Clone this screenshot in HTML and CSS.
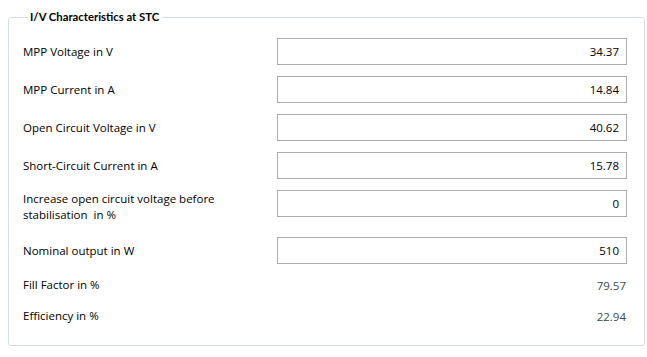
FILE: index.html
```html
<!DOCTYPE html>
<html lang="en">
<head>
    <meta charset="UTF-8">
    <title>I/V Characteristics at STC</title>
    <link rel="stylesheet" href="styles.css">
</head>
<body>

<fieldset class="group">
    <legend>I/V Characteristics at STC</legend>

    <div class="row">
        <label for="mppVoltage">MPP Voltage in V</label>
        <input type="text" id="mppVoltage" value="34.37">
    </div>
    <div class="row">
        <label for="mppCurrent">MPP Current in A</label>
        <input type="text" id="mppCurrent" value="14.84">
    </div>
    <div class="row">
        <label for="openVoltage">Open Circuit Voltage in V</label>
        <input type="text" id="openVoltage" value="40.62">
    </div>
    <div class="row">
        <label for="shortCurrent">Short-Circuit Current in A</label>
        <input type="text" id="shortCurrent" value="15.78">
    </div>
    <div class="row row-tall">
        <label for="stabilisation">Increase open circuit voltage before<br>stabilisation&nbsp; in %</label>
        <input type="text" id="stabilisation" value="0">
    </div>
    <div class="row">
        <label for="nominal">Nominal output in W</label>
        <input type="text" id="nominal" value="510">
    </div>
    <div class="row row-readonly">
        <span class="label">Fill Factor in %</span>
        <span class="value">79.57</span>
    </div>
    <div class="row row-readonly">
        <span class="label">Efficiency in %</span>
        <span class="value">22.94</span>
    </div>
</fieldset>

</body>
</html>
```

FILE: styles.css
```css
body {
    font-family: "Open Sans", "Noto Sans", sans-serif;
    font-size: 11.5px;
    color: #000;
    background-color: #fff;
    margin: 0;
    padding: 0;
}

.group {
    width: 637px;
    height: 337px;
    box-sizing: border-box;
    margin: 9px 0 0 8px;
    padding: 13px 17px 0 14px;
    border: 1px solid #d5dfe5;
    border-radius: 3px;
    display: flex;
    flex-direction: column;
    gap: 11px;
}

.group legend {
    font-family: Lato, "Open Sans", sans-serif;
    font-weight: bold;
    font-size: 11.3px;
    line-height: 16px;
    padding: 0 3px 0 2px;
    margin-left: 5px;
}

.row {
    display: flex;
    align-items: center;
    justify-content: space-between;
    height: 27px;
}

.row label,
.row .label {
    line-height: 16px;
}

.row input {
    width: 350px;
    height: 27px;
    box-sizing: border-box;
    border: 1px solid #abadb3;
    border-radius: 0;
    padding: 0 7px 0 4px;
    font-family: inherit;
    font-size: 11.5px;
    text-align: right;
    color: #000;
    outline: none;
}

.row-tall {
    height: 36px;
    align-items: flex-start;
}

.row-tall label {
    padding-top: 1px;
}

.row-readonly {
    height: 20px;
}

.row-readonly .value {
    color: #3c4a56;
    padding-right: 1px;
}
```
